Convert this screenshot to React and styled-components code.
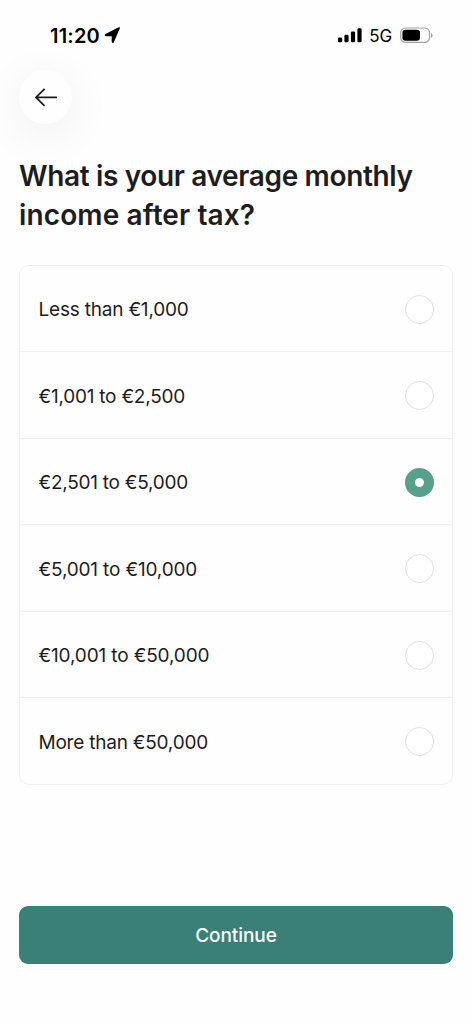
import React, { useState } from "react";
import styled, { createGlobalStyle } from "styled-components";

const GlobalStyle = createGlobalStyle`
  * { box-sizing: border-box; }
  body {
    margin: 0;
    background: #fefefe;
    color: #1d1d1d;
    font-family: Inter, "Liberation Sans", sans-serif;
    -webkit-font-smoothing: antialiased;
  }
`;

const Screen = styled.main`
  display: flex;
  flex-direction: column;
  width: 472px;
  height: 1024px;
  padding: 0 19px 60px;
  overflow: hidden;
`;

const StatusBar = styled.header`
  display: flex;
  justify-content: space-between;
  align-items: center;
  height: 70px;
  padding: 0 20px 0 31px;
  color: #000;
`;

const StatusGroup = styled.div`
  display: flex;
  align-items: center;
  gap: ${(p) => p.$gap}px;
`;

const Time = styled.span`
  padding-top: 1px;
  font-size: 20px;
  font-weight: 600;
  line-height: 24px;
  letter-spacing: 0.2px;
`;

const Network = styled.span`
  padding-top: 1px;
  margin-right: 1px;
  font-size: 17px;
  font-weight: 400;
  line-height: 24px;
  letter-spacing: -0.1px;
`;

const BackButton = styled.button`
  display: grid;
  place-items: center;
  flex: none;
  width: 53px;
  height: 54px;
  padding: 0;
  border: 0;
  border-radius: 50%;
  background: #fefefe;
  color: #1d1d1d;
  box-shadow: 0 10px 48px rgba(0, 0, 0, 0.07);
`;

const Title = styled.h1`
  margin: 33px 0 0;
  font-size: 28px;
  font-weight: 600;
  line-height: 38.5px;
`;

const TitleLine = styled.span`
  display: block;
  white-space: nowrap;
  letter-spacing: ${(p) => p.$tracking}px;
`;

const OptionList = styled.div`
  flex: none;
  height: 520px;
  margin-top: 31px;
  display: grid;
  grid-template-rows: 85.4px repeat(5, 1fr);
  border: 1px solid #f0f0f0;
  border-radius: 10px;
`;

const Option = styled.button`
  display: flex;
  align-items: center;
  justify-content: space-between;
  padding: 0 18.5px 0 18.5px;
  border: 0;
  border-top: ${(p) => (p.$first ? "0" : "1px solid #f0f0f0")};
  background: transparent;
  color: inherit;
  font: 400 19px/26px Inter, "Liberation Sans", sans-serif;
  letter-spacing: ${(p) => p.$tracking}px;
  text-align: left;
`;

const OptionLabel = styled.span`
  padding-top: 3px;
`;

const Radio = styled.span`
  width: 29px;
  height: 29px;
  margin-top: 1px;
  border-radius: 50%;
  border: ${(p) => (p.$checked ? "10px solid #57a08c" : "1px solid #e0e0e0")};
  background: #fff;
`;

const ContinueButton = styled.button`
  flex: none;
  height: 58px;
  margin-top: auto;
  padding: 2px 0 0;
  border: 0;
  border-radius: 9px;
  background: #3a8076;
  color: #fff;
  font: 500 19px/26px Inter, "Liberation Sans", sans-serif;
  letter-spacing: -0.05px;
`;

const options = [
  { label: "Less than €1,000", tracking: -0.2 },
  { label: "€1,001 to €2,500", tracking: -0.23 },
  { label: "€2,501 to €5,000", tracking: -0.25 },
  { label: "€5,001 to €10,000", tracking: -0.16 },
  { label: "€10,001 to €50,000", tracking: -0.14 },
  { label: "More than €50,000", tracking: -0.22 },
];

function LocationIcon() {
  return (
    <svg width="17" height="17" viewBox="0 0 17 17" aria-hidden="true">
      <path d="M15.2 1.2 9.5 14.6Q8.7 16 8.3 14.6V9.2Q8.3 8.7 7.8 8.7H2Q.6 8.5 1.8 7.6L14.4 1Q15.6.5 15.2 1.2Z" fill="currentColor" stroke="currentColor" strokeWidth="1.2" strokeLinejoin="round" />
    </svg>
  );
}

function SignalIcon() {
  return (
    <svg width="24" height="16" viewBox="0 0 24 16" fill="currentColor" aria-hidden="true">
      <rect x="0" y="10.5" width="4.2" height="4.8" rx="1.3" />
      <rect x="6.4" y="7.7" width="4.2" height="7.6" rx="1.3" />
      <rect x="12.9" y="4.5" width="4.2" height="10.8" rx="1.3" />
      <rect x="19.4" y="1.2" width="4.2" height="14.1" rx="1.3" />
    </svg>
  );
}

function BatteryIcon() {
  return (
    <svg width="33" height="17" viewBox="0 0 33 17" aria-hidden="true">
      <rect x=".7" y="1" width="28.8" height="14.4" rx="4.8" fill="none" stroke="#a3a3a3" strokeWidth="1.2" />
      <rect x="2.4" y="2.7" width="17.6" height="11" rx="3.2" fill="currentColor" />
      <path d="M31 6v5q1.6-.8 1.6-2.5T31 6Z" fill="#a3a3a3" />
    </svg>
  );
}

function BackIcon() {
  return (
    <svg width="24" height="20" viewBox="0 0 24 20" fill="none" stroke="currentColor" strokeWidth="1.8" aria-hidden="true">
      <path d="M23 10.4H2M10.6 1.8 2 10.4l8.6 8.4" />
    </svg>
  );
}

export default function App() {
  const [selected, setSelected] = useState(2);
  return (
    <>
      <GlobalStyle />
      <Screen>
        <StatusBar>
          <StatusGroup $gap={4}>
            <Time>11:20</Time>
            <LocationIcon />
          </StatusGroup>
          <StatusGroup $gap={7}>
            <SignalIcon />
            <Network>5G</Network>
            <BatteryIcon />
          </StatusGroup>
        </StatusBar>
        <BackButton aria-label="Back">
          <BackIcon />
        </BackButton>
        <Title>
          <TitleLine $tracking={-0.35}>What is your average monthly</TitleLine>
          <TitleLine $tracking={0.12}>income after tax?</TitleLine>
        </Title>
        <OptionList role="radiogroup">
          {options.map((option, i) => (
            <Option
              key={option.label}
              role="radio"
              aria-checked={selected === i}
              $first={i === 0}
              $tracking={option.tracking}
              onClick={() => setSelected(i)}
            >
              <OptionLabel>{option.label}</OptionLabel>
              <Radio $checked={selected === i} />
            </Option>
          ))}
        </OptionList>
        <ContinueButton>Continue</ContinueButton>
      </Screen>
    </>
  );
}
